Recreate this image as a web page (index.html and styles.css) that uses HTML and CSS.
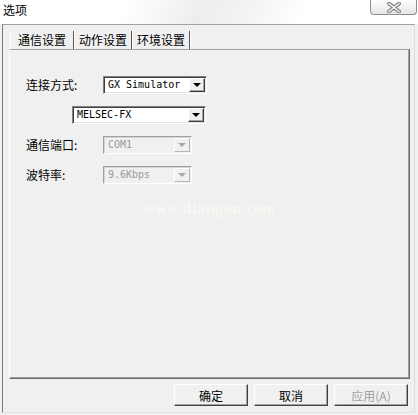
FILE: index.html
```html
<!DOCTYPE html>
<html lang="zh-CN">
<head>
    <meta charset="UTF-8">
    <title>选项</title>
    <link rel="stylesheet" href="styles.css">
</head>
<body>
    <div class="window">
        <!-- Title Bar -->
        <div class="titlebar">
            <span class="title">选项</span>
            <button class="close">
                <svg width="14" height="11" viewBox="0 0 14 11">
                    <path d="M2 1.5 L12 9.5 M12 1.5 L2 9.5" stroke="#7b7b7b" stroke-width="3.6" stroke-linecap="square" fill="none"/>
                    <path d="M2 1.5 L12 9.5 M12 1.5 L2 9.5" stroke="#fbfbfb" stroke-width="1.6" stroke-linecap="square" fill="none"/>
                </svg>
            </button>
        </div>

        <!-- Dialog Body -->
        <div class="frame">
            <div class="tabs">
                <div class="tab active">通信设置</div>
                <div class="tab">动作设置</div>
                <div class="tab">环境设置</div>
            </div>
            <div class="panel">
                <div class="form">
                    <div class="row">
                        <span class="label">连接方式:</span>
                        <div class="combo w-conn"><span class="value">GX Simulator</span><span class="arrow"></span></div>
                    </div>
                    <div class="row">
                        <div class="combo w-cpu indent"><span class="value">MELSEC-FX</span><span class="arrow"></span></div>
                    </div>
                    <div class="row">
                        <span class="label">通信端口:</span>
                        <div class="combo w-port disabled"><span class="value">COM1</span><span class="arrow"></span></div>
                    </div>
                    <div class="row">
                        <span class="label">波特率:</span>
                        <div class="combo w-port disabled"><span class="value">9.6Kbps</span><span class="arrow"></span></div>
                    </div>
                </div>
                <div class="watermark">www.diangon.com</div>
            </div>
            <div class="actions">
                <button class="button">确定</button>
                <button class="button">取消</button>
                <button class="button" disabled>应用(A)</button>
            </div>
        </div>
    </div>
</body>
</html>
```

FILE: styles.css
```css
body {
    margin: 0;
    width: 418px;
    height: 415px;
    overflow: hidden;
    font-family: "Noto Sans CJK SC", "Noto Sans", sans-serif;
    font-size: 12px;
    color: #000;
    background: #f0f0f0;
}
.window {
    display: flex;
    flex-direction: column;
    height: 100%;
}
.titlebar {
    display: flex;
    justify-content: space-between;
    align-items: flex-start;
    height: 24px;
    background: linear-gradient(115deg, #ffffff 30%, #ededed 48%, #f4f4f4 60%, #ffffff 72%);
}
.title {
    padding: 2px 0 0 3px;
    line-height: 16px;
}
.close {
    display: flex;
    justify-content: center;
    align-items: center;
    width: 47px;
    height: 15px;
    margin-right: 1px;
    padding: 0;
    border: 1px solid #8c8c8c;
    border-top: none;
    border-radius: 0 0 4px 4px;
    background: linear-gradient(#fdfdfd, #e6e6e6);
}
.frame {
    display: flex;
    flex-direction: column;
    height: 389px;
    margin: 0 3px 0 2px;
    padding: 6px 4px 0 6px;
    box-sizing: border-box;
    border: 1px solid;
    border-color: #a0a0a0 #dcdcdc #e4e4e4 #7a7a7a;
}
.tabs {
    display: flex;
    height: 18px;
    margin-left: 1px;
}
.tab {
    padding: 0 4px;
    line-height: 18px;
    border-right: 1px solid #555;
    box-shadow: 1px 0 #fff;
}
.tab.active {
    padding: 0 7px;
    border-left: 1px solid #fff;
}
.tab + .tab {
    margin-left: 1px;
}
.panel {
    height: 330px;
    box-sizing: border-box;
    border: 1px solid;
    border-color: #a0a0a0 #696969 #696969 #fff;
    box-shadow: inset -1px -1px #a0a0a0;
}
.form {
    display: flex;
    flex-direction: column;
    gap: 12px;
    padding: 26px 0 0 16px;
}
.row {
    display: flex;
    align-items: center;
    height: 18px;
}
.label {
    width: 77px;
    line-height: 18px;
}
.combo {
    display: flex;
    align-items: center;
    justify-content: space-between;
    height: 18px;
    box-sizing: border-box;
    padding: 0 1px 0 4px;
    background: #fff;
    border: 1px solid;
    border-color: #808080 #fff #fff #808080;
    box-shadow: inset 1px 1px #404040, inset -1px -1px #e3e3e3;
}
.w-conn {
    width: 104px;
}
.w-cpu {
    width: 134px;
}
.w-port {
    width: 89px;
}
.indent {
    margin-left: 46px;
}
.value {
    font-family: "DejaVu Sans Mono", "Liberation Mono", monospace;
    font-size: 10px;
    line-height: 14px;
}
.arrow {
    position: relative;
    width: 16px;
    height: 14px;
    box-sizing: border-box;
    background: #f0f0f0;
    border: 1px solid;
    border-color: #fff #404040 #404040 #fff;
    box-shadow: inset -1px -1px #a0a0a0;
}
.arrow::after {
    content: "";
    position: absolute;
    left: 3px;
    top: 4px;
    border-left: 4px solid transparent;
    border-right: 4px solid transparent;
    border-top: 4px solid #000;
}
.combo.disabled {
    background: #f0f0f0;
    border-color: #a0a0a0 #fff #fff #a0a0a0;
    box-shadow: inset 1px 1px #d4d4d4;
}
.combo.disabled .value {
    color: #9a9a9a;
}
.combo.disabled .arrow {
    border-color: #fff #b4b4b4 #b4b4b4 #fff;
    box-shadow: none;
}
.combo.disabled .arrow::after {
    border-top-color: #a8a8a8;
}
.watermark {
    margin-top: 16px;
    text-align: center;
    font-family: "Liberation Serif", serif;
    font-size: 16px;
    font-weight: bold;
    letter-spacing: 0.5px;
    color: #f5f9f2;
}
.actions {
    display: flex;
    justify-content: flex-end;
    gap: 6px;
    margin-top: 5px;
    padding-right: 2px;
}
.button {
    width: 74px;
    height: 22px;
    padding: 0;
    font-family: inherit;
    font-size: 12px;
    color: #000;
    background: #f0f0f0;
    border: 1px solid;
    border-color: #fff #404040 #404040 #fff;
    box-shadow: inset -1px -1px #a0a0a0;
}
.button:disabled {
    color: #a0a0a0;
}
```
